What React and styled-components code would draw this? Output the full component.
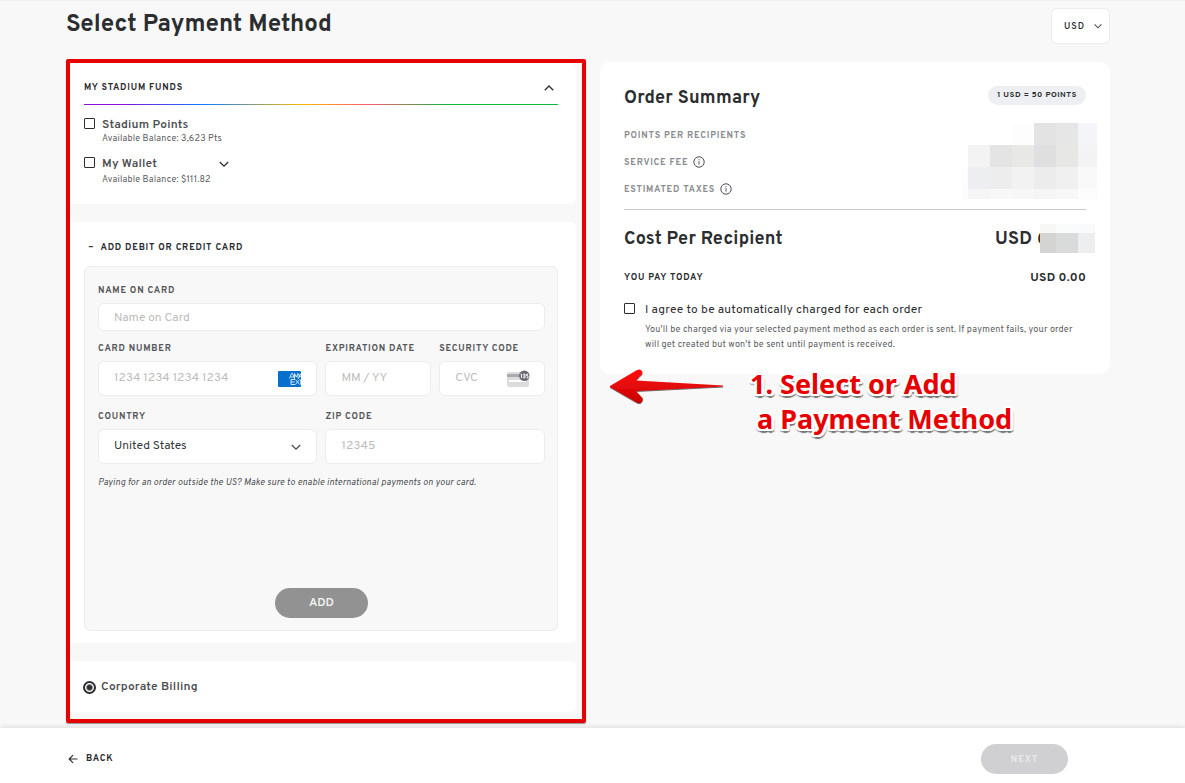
import React from "react";
import styled, { createGlobalStyle, css } from "styled-components";

const GlobalStyle = createGlobalStyle`
  *, *::before, *::after { box-sizing: border-box; }
  body {
    margin: 0;
    background: #f8f8f8;
    color: #2b2d2f;
    font-family: Overpass, Roboto, "Liberation Sans", sans-serif;
    letter-spacing: 0.2px;
  }
  button, input, select { font-family: inherit; }
  h1, h2, p { margin: 0; padding: 0; }
`;

const Page = styled.div`
  display: flex;
  flex-direction: column;
  min-height: 100vh;
  border-top: 1px solid #f1f1f1;
`;

const Main = styled.main`
  flex: 1;
  padding: 7px 75px 5px 66px;
`;

const TopBar = styled.header`
  display: flex;
  justify-content: space-between;
  align-items: flex-start;
  height: 51px;
`;

const Title = styled.h1`
  font-size: 24px;
  line-height: 34px;
  font-weight: 700;
  letter-spacing: normal;
`;

const SelectWrap = styled.div`
  position: relative;
  display: flex;
`;

const SelectChevron = styled.span`
  position: absolute;
  right: ${(p) => (p.$small ? "8px" : "16px")};
  top: 0;
  bottom: 0;
  display: flex;
  align-items: center;
  pointer-events: none;
  color: #4a4c50;
`;

const CurrencySelect = styled.select`
  appearance: none;
  width: 59px;
  height: 36px;
  padding: 0 12px;
  border: 1px solid #ececec;
  border-radius: 6px;
  background: #fff;
  color: #2b2d2f;
  font-size: 9px;
  font-weight: 600;
  letter-spacing: 1px;
`;

const Columns = styled.div`
  display: grid;
  grid-template-columns: 520fr 510fr;
  gap: 14px;
  align-items: start;
`;

const Highlight = styled.section`
  display: flex;
  flex-direction: column;
  gap: 18px;
  padding: 0 6px 7px 0;
  border: 4px solid #e60000;
  border-radius: 2px;
  box-shadow: 0 1px 1px rgba(0, 0, 0, 0.4);
`;

const Card = styled.div`
  padding: ${(p) => p.$padding};
  border-radius: 0 6px 6px 0;
  background: #fff;
`;

const CapsText = css`
  font-size: 9px;
  line-height: 12px;
  font-weight: 700;
  letter-spacing: 0.8px;
  text-transform: uppercase;
`;

const SectionToggle = styled.button`
  ${CapsText}
  display: flex;
  align-items: center;
  justify-content: ${(p) => (p.$spread ? "space-between" : "flex-start")};
  gap: 6px;
  width: 100%;
  padding: 0 4px 0 ${(p) => (p.$spread ? "0" : "4px")};
  border: 0;
  background: none;
  color: #2b2d2f;
`;

const Rainbow = styled.div`
  height: 1px;
  margin: 10px 0 12px;
  background: linear-gradient(90deg, #8a10d8 0%, #8a10d8 8%, #0a7aff 25%, #fcb900 46%, #ff5a6e 60%, #0ab83c 77%);
`;

const Fund = styled.div`
  display: grid;
  grid-template-columns: 11px 110px auto;
  column-gap: 7px;
  align-items: center;
  justify-content: start;
  margin-bottom: ${(p) => (p.$last ? "0" : "11px")};
`;

const Tick = styled.input`
  appearance: none;
  align-self: start;
  width: 11px;
  height: 11px;
  margin: 1px 0 0;
  border: 1px solid #2b2d2f;
  border-radius: 1px;
  background: #fff;
`;

const OptionLabel = styled.label`
  font-size: 12px;
  line-height: 16px;
  font-weight: 600;
  color: #4c4e51;
`;

const Balance = styled.p`
  grid-column: 2 / -1;
  font-size: 9px;
  line-height: ${(p) => (p.$loose ? "16px" : "12px")};
  color: #5b5d60;
`;

const IconButton = styled.button`
  display: flex;
  justify-self: start;
  padding: 0;
  border: 0;
  background: none;
  color: #2b2d2f;
`;

const CardForm = styled.form`
  display: grid;
  grid-template-columns: 220fr 106fr 106fr;
  column-gap: 8px;
  min-height: 365px;
  margin-top: 12px;
  padding: 18px 12px 12px 13px;
  grid-template-rows: auto auto auto auto 1fr;
  border: 1px solid #ededed;
  border-radius: 6px;
  background: #f8f8f8;
`;

const Field = styled.div`
  grid-column: span ${(p) => p.$span || 1};
  min-width: 0;
  margin-bottom: ${(p) => (p.$compact ? "12px" : "15px")};
`;

const FieldLabel = styled.label`
  ${CapsText}
  display: block;
  margin-bottom: 6px;
  color: #55575a;
`;

const InputWrap = styled.div`
  position: relative;
`;

const fieldBox = css`
  display: block;
  width: 100%;
  height: ${(p) => (p.$short ? "28px" : "35px")};
  padding: ${(p) => (p.$short ? "1px 15px 0" : "0 15px 2px")};
  border: 1px solid #ececec;
  border-radius: 6px;
  background: #fff;
  color: #36383b;
  font-size: 12px;
`;

const TextInput = styled.input`
  ${fieldBox}
  &::placeholder { color: #bdbdbd; opacity: 1; }
`;

const CountrySelect = styled.select`
  ${fieldBox}
  appearance: none;
`;

const FieldIcon = styled.span`
  position: absolute;
  right: 15px;
  top: 0;
  bottom: 0;
  display: flex;
  align-items: center;
`;

const Note = styled.p`
  grid-column: 1 / -1;
  margin-top: -2px;
  font-size: 9px;
  line-height: 12px;
  font-style: italic;
  color: #4c4e51;
`;

const PillButton = styled.button`
  height: 30px;
  padding: 0;
  border: 0;
  border-radius: 15px;
`;

const AddButton = styled(PillButton)`
  grid-column: 1 / -1;
  justify-self: center;
  align-self: end;
  width: 93px;
  background: #929292;
  color: #f4f4f4;
  font-size: 12px;
  font-weight: 600;
`;

const NextButton = styled(PillButton)`
  width: 87px;
  background: #d0d0d2;
  color: #e9e9ea;
  font-size: 9px;
  font-weight: 700;
  letter-spacing: 1px;
`;

const Billing = styled.div`
  display: flex;
  align-items: center;
  gap: 5px;
`;

const Radio = styled.input`
  appearance: none;
  width: 13px;
  height: 13px;
  margin: 0;
  border: 2px solid #2b2d2f;
  border-radius: 50%;
  background: radial-gradient(circle, #2b2d2f 0 2px, #fff 4px);
`;

const Aside = styled.aside`
  margin-top: 3px;
`;

const Summary = styled.section`
  position: relative;
  padding: 24px 24px 22px;
  border-radius: 10px;
  background: #fff;
`;

const Spread = styled.div`
  display: flex;
  justify-content: space-between;
  align-items: ${(p) => p.$align || "center"};
`;

const Heading = styled.h2`
  font-size: 18px;
  line-height: 26px;
  font-weight: 700;
`;

const HiddenTotal = styled(Heading)`
  width: 91px;
`;

const RateBadge = styled.span`
  padding: 0 9px;
  border-radius: 10px;
  background: #edeff2;
  font-size: 8px;
  line-height: 19px;
  font-weight: 700;
  letter-spacing: 0.5px;
`;

const Charges = styled.div`
  display: grid;
  row-gap: 13px;
  padding: 17px 0 12px;
  border-bottom: 1px solid #c9c9c9;
`;

const ChargeName = styled.div`
  ${CapsText}
  display: flex;
  align-items: flex-start;
  gap: 5px;
  line-height: 14px;
  color: #8b8d90;
`;

const TotalRow = styled(Spread)`
  padding: 17px 0;
`;

const PayLabel = styled.span`
  ${CapsText}
`;

const PayAmount = styled.strong`
  font-size: 12px;
  line-height: 16px;
  font-weight: 700;
`;

const Agree = styled.div`
  display: grid;
  grid-template-columns: 11px 1fr;
  column-gap: 10px;
  align-items: center;
  margin-top: 16px;
`;

const AgreeLabel = styled.label`
  font-size: 12px;
  line-height: 16px;
`;

const AgreeText = styled.p`
  grid-column: 2;
  margin-top: 4px;
  font-size: 9px;
  line-height: 15px;
  color: #5b5d60;
`;

const Mosaic = styled.svg`
  position: absolute;
  top: ${(p) => p.$top}px;
  right: ${(p) => p.$right}px;
`;

const Callout = styled.div`
  display: flex;
  align-items: flex-start;
  gap: 25px;
  margin-top: -8px;
  padding-left: 9px;
  position: relative;
`;

const CalloutText = styled.p`
  color: #e60000;
  font-family: "Noto Sans", sans-serif;
  font-size: 27px;
  line-height: 35px;
  font-weight: 700;
  letter-spacing: normal;
  white-space: pre;
  text-shadow: 2px 0 #fff, -2px 0 #fff, 0 2px #fff, 0 -2px #fff, 2px 2px #fff,
    -2px 2px #fff, 2px -2px #fff, -2px -2px #fff, 3px 1px #fff, -3px 1px #fff,
    1px 4px 1px #777, 3px 3px 1px #888, -2px 3px 1px #999;
`;

const Footer = styled.footer`
  display: flex;
  justify-content: space-between;
  align-items: center;
  padding: 16px 117px 9px 68px;
  background: #fff;
  box-shadow: 0 -1px 5px rgba(0, 0, 0, 0.12);
`;

const BackLink = styled.a`
  ${CapsText}
  display: flex;
  align-items: center;
  gap: 8px;
  color: #2b2d2f;
  text-decoration: none;
`;

function Chevron({ up, size = 10 }) {
  return (
    <svg width={size} height={size} viewBox="0 0 10 10" fill="none" stroke="currentColor" strokeWidth="1.3" aria-hidden="true">
      <path d={up ? "M.8 7.2 5 3l4.2 4.2" : "M.8 3 5 7.2 9.2 3"} />
    </svg>
  );
}

function InfoIcon() {
  return (
    <svg width="12" height="12" viewBox="0 0 12 12" fill="none" stroke="#4c4e51" aria-hidden="true">
      <circle cx="6" cy="6" r="5.2" />
      <path d="M6 5.2v3.300M6 3.200v1.100" />
    </svg>
  );
}

function AmexIcon() {
  return (
    <svg width="24" height="16" viewBox="0 0 24 16" aria-hidden="true">
      <rect width="23" height="16" rx="1" fill="#0670cf" />
      <g fill="none" stroke="#fff" strokeWidth=".8">
        <path d="m11.500 7.500 2-5h1l2 5M12.600 6h3M16.500 7.500v-5l1.800 3.500L20 2.500v5M20.500 2.800 23 6.500M23 2.500l-2.500 5" />
        <path d="M17 8.500h-4v5h4M13 11h3.500M17.500 8.500l4 5M21.500 8.500l-4 5M22.600 8.500v5" />
      </g>
    </svg>
  );
}

function CvcIcon() {
  return (
    <svg width="23" height="18" viewBox="0 0 23 18" aria-hidden="true">
      <rect y="2" width="22" height="15" rx="2" fill="#dcdcdc" />
      <path fill="#acacac" d="M0 4h15v3H0z" />
      <path fill="#fff" d="M2 10h17v2H2z" />
      <circle cx="17.3" cy="5.8" r="5.2" fill="#666873" />
      <path d="M13.600 4.200h1v3.800M16 4.200h2v3.600h-2M16.300 6H18M21 4.200h-1.300v1.500H21v2.100h-1.400" fill="none" stroke="#fff" strokeWidth="1" />
    </svg>
  );
}

function BackArrow() {
  return (
    <svg width="10" height="10" viewBox="0 0 10 10" fill="none" stroke="#2b2d2f" strokeWidth="1.2" aria-hidden="true">
      <path d="M9.5 5H1.2M5 1.2 1.2 5 5 8.8" />
    </svg>
  );
}

function CalloutArrow() {
  return (
    <svg width="116" height="38" viewBox="0 0 116 38" aria-hidden="true">
      <defs>
        <linearGradient id="arrowRed" x1="0" y1="0" x2="0" y2="1">
          <stop offset="0" stopColor="#ff1010" />
          <stop offset="1" stopColor="#c80000" />
        </linearGradient>
        <filter id="arrowShadow" x="-5%" y="-10%" width="110%" height="130%">
          <feDropShadow dx="0" dy="1" stdDeviation=".7" floodOpacity=".6" />
        </filter>
      </defs>
      <path
        d="M1 20 28 4q3-1.5 5 1c1 2 0 4-2 5l-4 4.5L114 19.5v1L27 25l5 5.5c2 1.500 2.500 3 1 5-1.500 2-4 2-6 .5L1 21Z"
        fill="url(#arrowRed)"
        filter="url(#arrowShadow)"
      />
    </svg>
  );
}

const feeColumns = [0, 7, 29, 51, 73, 95, 117, 136];
const feeRows = [0, 22, 44, 66, 76];
const feeShades = [
  ["#fff", "#fff", "#fff", "#fdfdfd", "#e3e3e3", "#e6e6e6", "#f3f5f8"],
  ["#fff", "#f3f3f3", "#e4e4e4", "#e8e8e6", "#dfdfdf", "#e7e7e5", "#f3f3f3"],
  ["#fdfdfd", "#eceef1", "#ededed", "#f2f2f2", "#ececec", "#f0f0f0", "#f9f9f9"],
  ["#fcfcfc", "#f5f5f5", "#f8f8f8", "#f7f7f7", "#f5f5f5", "#f8f8f8", "#fcfcfc"],
];
const totalColumns = [0, 16, 38, 55];
const totalRows = [0, 9, 29];
const totalShades = [
  ["#f7f7f5", "#fafcfc", "#f9fafb"],
  ["#d4d4d2", "#d9dbdb", "#eceef0"],
];

function Redaction({ columns, rows, shades, top, right }) {
  const width = columns[columns.length - 1];
  const height = rows[rows.length - 1];
  return (
    <Mosaic $top={top} $right={right} width={width} height={height} shapeRendering="crispEdges" aria-hidden="true">
      {shades.map((line, r) =>
        line.map((fill, c) => (
          <rect
            key={`${r}-${c}`}
            x={columns[c]}
            y={rows[r]}
            width={columns[c + 1] - columns[c]}
            height={rows[r + 1] - rows[r]}
            fill={fill}
          />
        ))
      )}
    </Mosaic>
  );
}

function FormField({ id, label, placeholder, span, compact, icon }) {
  return (
    <Field $span={span} $compact={compact}>
      <FieldLabel htmlFor={id}>{label}</FieldLabel>
      <InputWrap>
        <TextInput id={id} placeholder={placeholder} $short={compact} />
        {icon && <FieldIcon>{icon}</FieldIcon>}
      </InputWrap>
    </Field>
  );
}

export default function App() {
  return (
    <Page>
      <GlobalStyle />
      <Main>
        <TopBar>
          <Title>Select Payment Method</Title>
          <SelectWrap>
            <CurrencySelect aria-label="Currency" defaultValue="USD">
              <option>USD</option>
            </CurrencySelect>
            <SelectChevron $small><Chevron size={8} /></SelectChevron>
          </SelectWrap>
        </TopBar>
        <Columns>
          <Highlight>
            <Card $padding="19px 18px 16px 14px">
              <SectionToggle type="button" $spread>
                My Stadium Funds
                <Chevron up />
              </SectionToggle>
              <Rainbow />
              <Fund>
                <Tick type="checkbox" id="points" />
                <OptionLabel htmlFor="points">Stadium Points</OptionLabel>
                <Balance>Available Balance: 3,623 Pts</Balance>
              </Fund>
              <Fund $last>
                <Tick type="checkbox" id="wallet" />
                <OptionLabel htmlFor="wallet">My Wallet</OptionLabel>
                <IconButton type="button" aria-label="Show wallet"><Chevron /></IconButton>
                <Balance $loose>Available Balance: $111.82</Balance>
              </Fund>
            </Card>
            <Card $padding="20px 18px 12px 14px">
              <SectionToggle type="button">
                <span>−</span>
                Add debit or credit card
              </SectionToggle>
              <CardForm>
                <FormField id="name" label="Name on card" placeholder="Name on Card" span={3} compact />
                <FormField id="number" label="Card number" placeholder="1234 1234 1234 1234" icon={<AmexIcon />} />
                <FormField id="expiry" label="Expiration date" placeholder="MM / YY" />
                <FormField id="cvc" label="Security code" placeholder="CVC" icon={<CvcIcon />} />
                <Field>
                  <FieldLabel htmlFor="country">Country</FieldLabel>
                  <InputWrap>
                    <CountrySelect id="country" defaultValue="United States">
                      <option>United States</option>
                    </CountrySelect>
                    <SelectChevron><Chevron /></SelectChevron>
                  </InputWrap>
                </Field>
                <FormField id="zip" label="Zip code" placeholder="12345" span={2} />
                <Note>Paying for an order outside the US? Make sure to enable international payments on your card.</Note>
                <AddButton type="button">ADD</AddButton>
              </CardForm>
            </Card>
            <Card $padding="18px 18px 17px 13px">
              <Billing>
                <Radio type="radio" id="billing" name="method" defaultChecked />
                <OptionLabel htmlFor="billing">Corporate Billing</OptionLabel>
              </Billing>
            </Card>
          </Highlight>
          <Aside>
            <Summary>
              <Spread $align="flex-start">
                <Heading>Order Summary</Heading>
                <RateBadge>1 USD = 50 POINTS</RateBadge>
              </Spread>
              <Charges>
                <ChargeName>Points per recipients</ChargeName>
                <ChargeName>Service fee <InfoIcon /></ChargeName>
                <ChargeName>Estimated taxes <InfoIcon /></ChargeName>
              </Charges>
              <TotalRow>
                <Heading as="span">Cost Per Recipient</Heading>
                <HiddenTotal as="span">USD 6</HiddenTotal>
              </TotalRow>
              <Spread>
                <PayLabel>You pay today</PayLabel>
                <PayAmount>USD 0.00</PayAmount>
              </Spread>
              <Agree>
                <Tick type="checkbox" id="agree" />
                <AgreeLabel htmlFor="agree">I agree to be automatically charged for each order</AgreeLabel>
                <AgreeText>
                  You'll be charged via your selected payment method as each order is sent. If payment fails, your order
                  will get created but won't be sent until payment is received.
                </AgreeText>
              </Agree>
              <Redaction columns={feeColumns} rows={feeRows} shades={feeShades} top={61} right={13} />
              <Redaction columns={totalColumns} rows={totalRows} shades={totalShades} top={162} right={15} />
            </Summary>
            <Callout>
              <CalloutArrow />
              <CalloutText>{"1. Select or Add\n a Payment Method"}</CalloutText>
            </Callout>
          </Aside>
        </Columns>
      </Main>
      <Footer>
        <BackLink href="#back"><BackArrow />Back</BackLink>
        <NextButton type="button">NEXT</NextButton>
      </Footer>
    </Page>
  );
}
